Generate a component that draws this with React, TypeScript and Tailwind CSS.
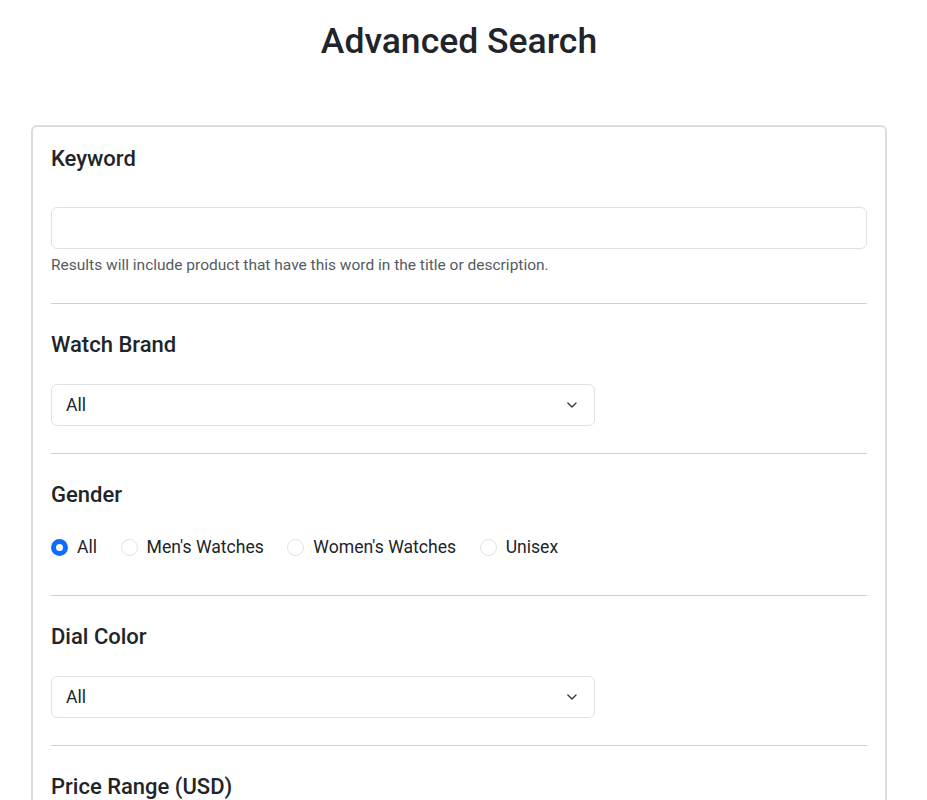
import React from "react";

const Chevron = () => (
  <svg width="16" height="16" viewBox="0 0 16 16" fill="none" className="text-[#343a40]">
    <path d="M2 5l6 6 6-6" stroke="currentColor" strokeWidth="2" strokeLinecap="round" strokeLinejoin="round" transform="translate(2.5 2.5) scale(0.68)" />
  </svg>
);

const Select = () => (
  <div className="w-[544px] h-[42px] border border-[#dee2e6] rounded-[6px] flex items-center justify-between pl-[14px] pr-[14px] text-[17.6px] text-[#212529] bg-white">
    <span className="pt-[1px]">All</span>
    <Chevron />
  </div>
);

const Radio = ({ checked, label }: { checked?: boolean; label: string }) => (
  <label className="flex items-center gap-[9px] mr-[23.5px]">
    {checked ? (
      <span className="w-[17px] h-[17px] rounded-full bg-[#0d6efd] flex items-center justify-center">
        <span className="w-[7px] h-[7px] rounded-full bg-white" />
      </span>
    ) : (
      <span className="w-[17px] h-[17px] rounded-full border border-[#dee2e6] bg-white" />
    )}
    <span className="text-[17.6px] text-[#212529]">{label}</span>
  </label>
);

const Label = ({ children }: { children: React.ReactNode }) => (
  <div className="pt-[1px] text-[22px] leading-[24px] font-medium text-[#212529]">{children}</div>
);

export default function App() {
  return (
    <div className="min-h-screen bg-white" style={{ fontFamily: "Roboto, 'Liberation Sans', sans-serif" }}>
      <div className="w-[918px]">
        <h1 className="text-center text-[35.5px] leading-[38px] font-medium text-[#212529] pt-[22px]">Advanced Search</h1>
        <div className="mx-[31px] mt-[65px] border-[2px] border-[#dcdcdc] rounded-[6px] px-[18px] pt-[19px] pb-[20px]">
          <div className="pb-[28px] border-b border-[#cfcfcf]">
            <Label>Keyword</Label>
            <div className="mt-[36px] h-[42px] border border-[#dee2e6] rounded-[6px] bg-white" />
            <div className="mt-[6px] text-[15.5px] leading-[20px] text-[#555b61]">
              Results will include product that have this word in the title or description.
            </div>
          </div>
          <div className="pt-[28px] pb-[27px] border-b border-[#cfcfcf]">
            <Label>Watch Brand</Label>
            <div className="mt-[27px]">
              <Select />
            </div>
          </div>
          <div className="pt-[28px] pb-[36px] border-b border-[#cfcfcf]">
            <Label>Gender</Label>
            <div className="mt-[28px] flex items-center h-[24px]">
              <Radio checked label="All" />
              <Radio label="Men's Watches" />
              <Radio label="Women's Watches" />
              <Radio label="Unisex" />
            </div>
          </div>
          <div className="pt-[28px] pb-[27px] border-b border-[#cfcfcf]">
            <Label>Dial Color</Label>
            <div className="mt-[27px]">
              <Select />
            </div>
          </div>
          <div className="pt-[28px] pb-[28px]">
            <Label>Price Range (USD)</Label>
            <div className="mt-[28px] h-[42px]" />
          </div>
        </div>
      </div>
    </div>
  );
}
